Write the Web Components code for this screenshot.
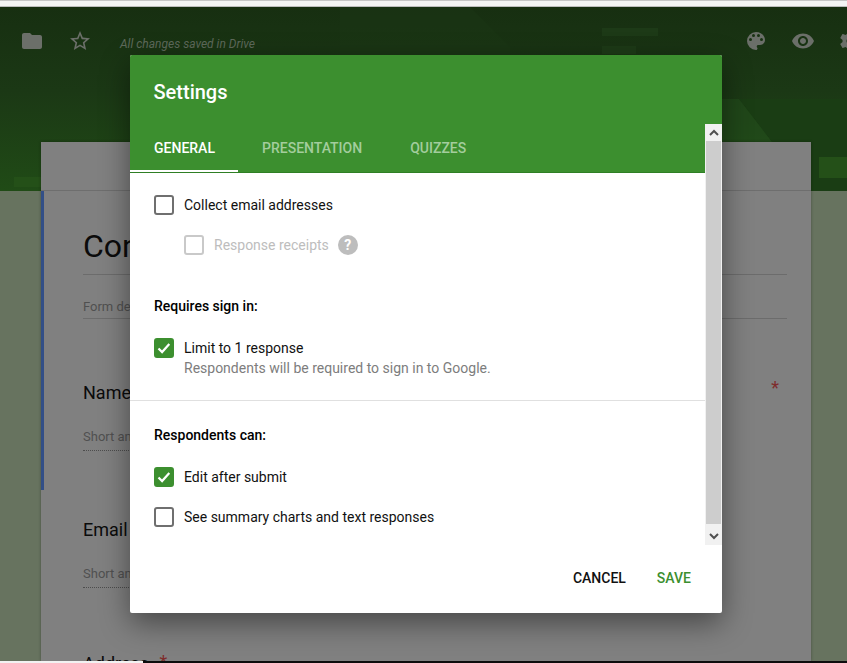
<!DOCTYPE html>
<html>
<head>
<meta charset="utf-8">
<title>Settings</title>
<style>
    html, body { margin: 0; height: 100%; overflow: hidden; background: #67735f; }
    body { font-family: Roboto, "Liberation Sans", sans-serif; }
</style>
</head>
<body>
<forms-app>
    <form-header slot="header"></form-header>
    <form-card slot="card">
        <form-question label="Name" required></form-question>
        <form-question label="Email"></form-question>
    </form-card>
</forms-app>
<settings-dialog>
    <settings-check label="Collect email addresses"></settings-check>
    <settings-check label="Response receipts" sub disabled help></settings-check>
    <section-title style="margin-top:41px">Requires sign in:</section-title>
    <settings-check label="Limit to 1 response" note="Respondents will be required to sign in to Google." checked style="margin-top:22px"></settings-check>
    <hr-line></hr-line>
    <section-title style="margin-top:24px">Respondents can:</section-title>
    <settings-check label="Edit after submit" checked style="margin-top:22px"></settings-check>
    <settings-check label="See summary charts and text responses"></settings-check>
</settings-dialog>

<script>
const icons = {
    folder: '<path d="M10 4H4c-1.1 0-2 .9-2 2v12c0 1.1.9 2 2 2h16c1.1 0 2-.9 2-2V8c0-1.1-.9-2-2-2h-8l-2-2z"/>',
    star: '<path d="M22 9.24l-7.19-.62L12 2 9.19 8.63 2 9.24l5.46 4.73L5.82 21 12 17.27 18.18 21l-1.63-7.03L22 9.24zM12 15.4l-3.76 2.27 1-4.28-3.32-2.88 4.38-.38L12 6.1l1.71 4.04 4.38.38-3.32 2.88 1 4.28L12 15.4z"/>',
    palette: '<path d="M12 3a9 9 0 0 0 0 18c.83 0 1.5-.67 1.5-1.5 0-.39-.15-.74-.39-1.01-.23-.26-.38-.61-.38-.99 0-.83.67-1.5 1.5-1.5H16c2.76 0 5-2.24 5-5 0-4.42-4.03-8-9-8zm-5.5 9a1.5 1.5 0 1 1 0-3 1.5 1.5 0 0 1 0 3zm3-4a1.5 1.5 0 1 1 0-3 1.5 1.5 0 0 1 0 3zm5 0a1.5 1.5 0 1 1 0-3 1.5 1.5 0 0 1 0 3zm3 4a1.5 1.5 0 1 1 0-3 1.5 1.5 0 0 1 0 3z"/>',
    eye: '<path d="M12 4.5C7 4.5 2.73 7.61 1 12c1.73 4.39 6 7.5 11 7.5s9.27-3.11 11-7.5c-1.73-4.39-6-7.5-11-7.5zM12 17c-2.76 0-5-2.24-5-5s2.24-5 5-5 5 2.24 5 5-2.24 5-5 5zm0-8c-1.66 0-3 1.34-3 3s1.34 3 3 3 3-1.34 3-3-1.34-3-3-3z"/>',
    gear: '<path d="M19.43 12.98c.04-.32.07-.64.07-.98s-.03-.66-.07-.98l2.11-1.65c.19-.15.24-.42.12-.64l-2-3.46c-.12-.22-.39-.3-.61-.22l-2.49 1c-.52-.4-1.08-.73-1.69-.98l-.38-2.65C14.46 2.18 14.25 2 14 2h-4c-.25 0-.46.18-.49.42l-.38 2.65c-.61.25-1.17.59-1.69.98l-2.49-1c-.23-.09-.49 0-.61.22l-2 3.46c-.13.22-.07.49.12.64l2.11 1.65c-.04.32-.07.65-.07.98s.03.66.07.98l-2.11 1.65c-.19.15-.24.42-.12.64l2 3.46c.12.22.39.3.61.22l2.49-1c.52.4 1.08.73 1.69.98l.38 2.65c.03.24.24.42.49.42h4c.25 0 .46-.18.49-.42l.38-2.65c.61-.25 1.17-.59 1.69-.98l2.49 1c.23.09.49 0 .61-.22l2-3.46c.12-.22.07-.49-.12-.64l-2.11-1.65zM12 15.5c-1.93 0-3.5-1.57-3.5-3.5s1.57-3.5 3.5-3.5 3.5 1.57 3.5 3.5-1.57 3.5-3.5 3.5z"/>'
}
const svg = (name, size) => `<svg width="${size}" height="${size}" viewBox="0 0 24 24" fill="currentColor">${icons[name]}</svg>`

const appTemplate = document.createElement('template')
appTemplate.innerHTML = `
    <style>
        :host { display: flex; flex-direction: column; height: 663px; position: relative; overflow: hidden; }
        .chrome { height: 5px; background: #f4f4f4; border-top: 1px solid #c6c6c6; border-bottom: 1px solid #bdbdbd; flex: none; }
        .page { flex: 1; min-height: 0; display: flex; flex-direction: column; }
        .cardwrap { flex: 1; min-height: 0; padding: 0 36px 0 41px; margin-top: -49px; position: relative; z-index: 1; display: flex; }
        .foot { height: 2px; flex: none; position: relative; z-index: 2; background: linear-gradient(90deg, #f2f2f2 143px, #0d0d0d 143px); }
    </style>
    <div class="chrome"></div>
    <div class="page">
        <slot name="header"></slot>
        <div class="cardwrap"><slot name="card"></slot></div>
    </div>
    <div class="foot"></div>
`
class FormsApp extends HTMLElement {
    constructor() {
        super()
        this.attachShadow({ mode: 'open' })
        this.shadowRoot.appendChild(appTemplate.content.cloneNode(true))
    }
}
customElements.define('forms-app', FormsApp)

const headerTemplate = document.createElement('template')
headerTemplate.innerHTML = `
    <style>
        :host { display: block; height: 184px; flex: none; position: relative; overflow: hidden;
            background: linear-gradient(180deg, #172f11 0%, #1b3815 45%, #204b16 100%); }
        .shape { position: absolute; }
        .bar { display: flex; align-items: center; height: 68px; padding: 0 0 0 20px; color: #6b6f69; position: relative; }
        .bar svg { display: block; flex: none; }
        .star { margin-left: 24px; }
        .saved { margin-left: 28px; font: italic 12px Roboto, sans-serif; color: #5e6a5b; position: relative; top: 3px; white-space: nowrap; }
        .right { margin-left: auto; display: flex; gap: 23px; align-items: center; margin-right: -15px; }
    </style>
    <svg class="shape" style="left:0;top:0" width="847" height="184" viewBox="0 0 847 184">
        <path d="M340 0h130l40 40v110H340z" fill="#1e3a17" opacity=".35"/>
        <path d="M739 92h108v92H800l-28-49z" fill="#1a3d14"/>
        <path d="M722 92h17l33 43h-50z" fill="#234f1c" opacity=".6"/>
        <rect x="602" y="21" width="56" height="8" fill="#1d3a17"/>
        <rect x="602" y="39" width="34" height="8" fill="#1d3a17"/>
        <rect x="14" y="170" width="27" height="10" fill="#245018"/>
        <rect x="819" y="150" width="28" height="21" fill="#245018"/>
    </svg>
    <div class="bar">
        <span class="ic"></span>
        <span class="ic star"></span>
        <span class="saved">All changes saved in Drive</span>
        <span class="right"></span>
    </div>
`
class FormHeader extends HTMLElement {
    constructor() {
        super()
        this.attachShadow({ mode: 'open' })
        this.shadowRoot.appendChild(headerTemplate.content.cloneNode(true))
        const ic = this.shadowRoot.querySelectorAll('.ic')
        ic[0].innerHTML = svg('folder', 24)
        ic[1].innerHTML = svg('star', 24)
        this.shadowRoot.querySelector('.right').innerHTML = svg('palette', 24) + svg('eye', 24) + svg('gear', 24)
    }
}
customElements.define('form-header', FormHeader)

const cardTemplate = document.createElement('template')
cardTemplate.innerHTML = `
    <style>
        :host { display: block; width: 770px; background: #808080; box-sizing: border-box; flex: none; box-shadow: 0 0 3px rgba(0,0,0,.3); }
        .tabs { height: 48px; border-bottom: 1px solid #6e6e6e; }
        .body { border-left: 3px solid #324f87; height: 299px; padding: 0 24px 0 39px; }
        .title { font-size: 32px; color: #0b0b0b; padding-top: 35px; line-height: 40px; border-bottom: 1px solid #6c6c6c; height: 48px; }
        .desc { font-size: 13px; color: #505050; margin-top: 23px; line-height: 18px; height: 20px; border-bottom: 1px solid #6c6c6c; }
        .questions { padding-top: 10px; }
        .addr { position: absolute; left: 83px; top: 511px; font-size: 18px; color: #0b0b0b; }
        .addr i { color: #7f2c2c; font-style: normal; margin-left: 6px; position: relative; top: -2px; }
    </style>
    <div class="tabs"></div>
    <div class="body">
        <div class="title">Con</div>
        <div class="desc">Form de</div>
        <div class="questions"><slot></slot></div>
    </div>
    <div class="addr">Address <i>*</i></div>
`
class FormCard extends HTMLElement {
    constructor() {
        super()
        this.attachShadow({ mode: 'open' })
        this.shadowRoot.appendChild(cardTemplate.content.cloneNode(true))
    }
}
customElements.define('form-card', FormCard)

const questionTemplate = document.createElement('template')
questionTemplate.innerHTML = `
    <style>
        :host { display: block; position: relative; margin-top: 52px; height: 85px; }
        .label { font-size: 18px; line-height: 24px; color: #0b0b0b; }
        .answer { font-size: 13px; color: #505050; margin-top: 24px; width: 240px; padding-bottom: 5px; border-bottom: 1px dotted #4d4d4d; line-height: 16px; }
        .req { position: absolute; right: 8px; top: -4px; color: #7f2c2c; font-size: 18px; }
    </style>
    <div class="label"></div>
    <div class="answer">Short an</div>
`
class FormQuestion extends HTMLElement {
    constructor() {
        super()
        this.attachShadow({ mode: 'open' })
        this.shadowRoot.appendChild(questionTemplate.content.cloneNode(true))
    }
    connectedCallback() {
        this.shadowRoot.querySelector('.label').textContent = this.getAttribute('label')
        if (this.hasAttribute('required')) {
            const star = document.createElement('span')
            star.className = 'req'
            star.textContent = '*'
            this.shadowRoot.appendChild(star)
        }
    }
}
customElements.define('form-question', FormQuestion)

const dialogTemplate = document.createElement('template')
dialogTemplate.innerHTML = `
    <style>
        :host { display: flex; flex-direction: column; position: absolute; left: 130px; top: 55px; width: 592px; height: 558px; z-index: 5;
            background: #fff; border-radius: 2px; box-shadow: 0 10px 30px rgba(0,0,0,.45); overflow: hidden; }
        .head { background: #3c8f2f; height: 118px; flex: none; display: flex; flex-direction: column; border-bottom: 1px solid #2f7f25; box-sizing: border-box; }
        h2 { margin: 0; padding: 25px 24px 0 23.5px; font: 500 20px/24px Roboto, sans-serif; color: #fff; flex: 1; }
        .tabs { display: flex; height: 48px; flex: none; font: 500 14px/48px Roboto, sans-serif; color: #a3cd9d; }
        .tabs span { padding: 0 24px; box-sizing: border-box; height: 48px; }
        .tabs .on { color: #fff; border-bottom: 2px solid #fff; width: 108px; }
        .middle { display: flex; height: 372px; flex: none; min-height: 0; position: relative; }
        .scroll { flex: 1; padding: 22px 0 0 24px; min-width: 0; }
        .track { position: absolute; right: 0; top: -49px; bottom: 0; width: 17px; background: #f1f1f1; display: flex; flex-direction: column; }
        .track b { display: flex; height: 17px; align-items: center; justify-content: center; flex: none; }
        .track i { flex: 1; background: #cdcdcd; margin: 0 1px 4px; }
        .foot { flex: 1; display: flex; justify-content: flex-end; align-items: center; gap: 31px; padding: 0 31px 2px 0; font: 500 14px Roboto, sans-serif; color: #111; }
        .save { color: #3c8f2f; }
    </style>
    <div class="head">
        <h2>Settings</h2>
        <div class="tabs"><span class="on">GENERAL</span><span>PRESENTATION</span><span>QUIZZES</span></div>
    </div>
    <div class="middle">
        <div class="scroll"><slot></slot></div>
        <div class="track">
            <b><svg width="10" height="7" viewBox="0 0 10 7"><path d="M1 6l4-4 4 4" fill="none" stroke="#505050" stroke-width="2"/></svg></b>
            <i></i>
            <b><svg width="10" height="7" viewBox="0 0 10 7"><path d="M1 1l4 4 4-4" fill="none" stroke="#505050" stroke-width="2"/></svg></b>
        </div>
    </div>
    <div class="foot"><span>CANCEL</span><span class="save">SAVE</span></div>
`
class SettingsDialog extends HTMLElement {
    constructor() {
        super()
        this.attachShadow({ mode: 'open' })
        this.shadowRoot.appendChild(dialogTemplate.content.cloneNode(true))
    }
}
customElements.define('settings-dialog', SettingsDialog)

const checkTemplate = document.createElement('template')
checkTemplate.innerHTML = `
    <style>
        :host { display: block; font-size: 14px; color: #111; margin-bottom: 20px; }
        :host([sub]) { padding-left: 30px; }
        .row { display: flex; align-items: center; height: 20px; }
        .box { width: 20px; height: 20px; box-sizing: border-box; border: 2px solid #6f6f6f; border-radius: 3px; margin-right: 10px; flex: none; display: flex; align-items: center; justify-content: center; }
        :host([disabled]) .box { border-color: #c9c9c9; }
        :host([disabled]) { color: #bdbdbd; }
        :host([checked]) .box { background: #3c8f2f; border-color: #3c8f2f; }
        .help { width: 20px; height: 20px; border-radius: 50%; background: #bdbdbd; color: #fff; font: 700 14px/20px Roboto, sans-serif; text-align: center; margin-left: 9px; }
        .note { color: #7d7d7d; padding-left: 30px; line-height: 20px; margin-bottom: -20px; }
        .box svg { display: none; }
        :host([checked]) .box svg { display: block; }
    </style>
    <div class="row">
        <span class="box"><svg width="16" height="16" viewBox="0 0 16 16"><path d="M2.5 8.5l3.6 3.6 7.2-8" fill="none" stroke="#fff" stroke-width="2.2"/></svg></span>
        <span class="label"></span>
    </div>
`
class SettingsCheck extends HTMLElement {
    constructor() {
        super()
        this.attachShadow({ mode: 'open' })
        this.shadowRoot.appendChild(checkTemplate.content.cloneNode(true))
    }
    connectedCallback() {
        this.shadowRoot.querySelector('.label').textContent = this.getAttribute('label')
        if (this.hasAttribute('help')) {
            const q = document.createElement('span')
            q.className = 'help'
            q.textContent = '?'
            this.shadowRoot.querySelector('.row').appendChild(q)
        }
        if (this.hasAttribute('note')) {
            const n = document.createElement('div')
            n.className = 'note'
            n.textContent = this.getAttribute('note')
            this.shadowRoot.appendChild(n)
        }
    }
}
customElements.define('settings-check', SettingsCheck)

class SectionTitle extends HTMLElement {
    constructor() {
        super()
        this.attachShadow({ mode: 'open' })
        this.shadowRoot.innerHTML = `
            <style>:host { display: block; font: 500 14px/20px Roboto, sans-serif; color: #000; }</style>
            <slot></slot>
        `
    }
}
customElements.define('section-title', SectionTitle)

class HrLine extends HTMLElement {
    constructor() {
        super()
        this.attachShadow({ mode: 'open' })
        this.shadowRoot.innerHTML = `
            <style>:host { display: block; height: 1px; background: #e0e0e0; margin: 42px 0 0 -24px; width: 576px; }</style>
        `
    }
}
customElements.define('hr-line', HrLine)
</script>
</body>
</html>
